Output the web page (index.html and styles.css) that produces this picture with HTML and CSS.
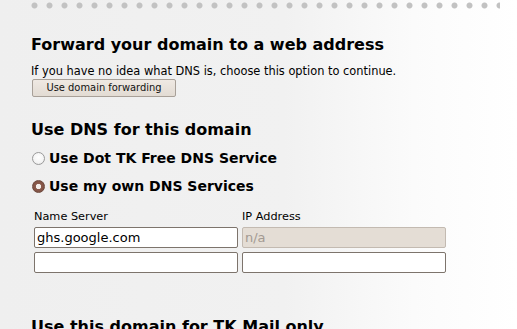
FILE: index.html
```html
<!DOCTYPE html>
<html>
<head>
<meta charset="utf-8">
<link rel="stylesheet" href="styles.css">
</head>
<body>
<div class="dots"></div>
<div class="content">
  <h2 class="heading first">Forward your domain to a web address</h2>
  <p class="hint">If you have no idea what DNS is, choose this option to continue.</p>
  <button class="btn" type="button">Use domain forwarding</button>

  <h2 class="heading dns">Use DNS for this domain</h2>
  <label class="radio-row"><span class="radio"></span>Use Dot TK Free DNS Service</label>
  <label class="radio-row"><span class="radio checked"></span>Use my own DNS Services</label>

  <div class="ns-grid">
    <div class="col-label">Name Server</div>
    <div class="col-label">IP Address</div>
    <div class="field">ghs.google.com</div>
    <div class="field disabled">n/a</div>
    <div class="field"></div>
    <div class="field"></div>
  </div>

  <h2 class="heading mail">Use this domain for TK Mail only</h2>
</div>
</body>
</html>
```

FILE: styles.css
```css
html, body {
  margin: 0;
  padding: 0;
}
body {
  width: 517px;
  height: 329px;
  overflow: hidden;
  background: linear-gradient(to right, #efefef 0%, #f1f1f1 55%, #fbfbfb 80%, #ffffff 100%);
  font-family: "DejaVu Sans", Verdana, sans-serif;
  color: #000;
}
.dots {
  margin-left: 27px;
  width: 473px;
  height: 11px;
  background-image: radial-gradient(circle at 7.5px 5.5px, #c2c2c2 0, #c2c2c2 2.6px, rgba(194,194,194,0) 3.4px);
  background-size: 15px 11px;
  background-repeat: repeat-x;
}
.content {
  padding-left: 31px;
}
.heading {
  margin: 0;
  font-size: 16px;
  line-height: 20px;
  font-weight: bold;
}
.first {
  margin-top: 24px;
}
.hint {
  margin: 10px 0 0 0;
  font-size: 11.4px;
  line-height: 13px;
}
.btn {
  display: block;
  margin: 1px 0 0 1px;
  width: 144px;
  height: 18px;
  padding: 0;
  border: 1px solid #a8a098;
  border-radius: 2px;
  background: linear-gradient(to bottom, #efe9e3 0%, #e2dbd3 100%);
  font-family: "DejaVu Sans Condensed", "DejaVu Sans", sans-serif;
  font-size: 11px;
  color: #111;
  line-height: 16px;
}
.dns {
  margin-top: 23px;
}
.radio-row {
  display: flex;
  align-items: center;
  gap: 4px;
  font-size: 14px;
  font-weight: bold;
  line-height: 28px;
  height: 28px;
}
.dns + .radio-row {
  margin-top: 4px;
}
.radio {
  box-sizing: border-box;
  width: 13px;
  height: 13px;
  margin-left: 1px;
  border-radius: 50%;
  border: 1px solid #9a9a9a;
  background: radial-gradient(circle at 50% 40%, #ffffff 0%, #f4f4f4 60%, #dcdcdc 100%);
}
.radio.checked {
  border-color: #6e4a3e;
  background: radial-gradient(circle, #f2ece8 0, #f2ece8 2.3px, #8a5a4c 3px, #7a4c3e 100%);
}
.ns-grid {
  display: grid;
  grid-template-columns: 204px 204px;
  column-gap: 4px;
  margin-top: 10px;
  margin-left: 3px;
}
.col-label {
  font-size: 11.3px;
  line-height: 13px;
  height: 13px;
  margin-bottom: 4px;
}
.field {
  box-sizing: border-box;
  height: 21px;
  border: 1px solid #7d746c;
  border-radius: 2px;
  background: #fff;
  font-size: 13px;
  line-height: 19px;
  padding-left: 2px;
  margin-bottom: 4px;
  color: #000;
}
.field.disabled {
  background: #e4ddd5;
  border-color: #c3bab1;
  color: #a39a92;
}
.mail {
  margin-top: 40px;
}
```
